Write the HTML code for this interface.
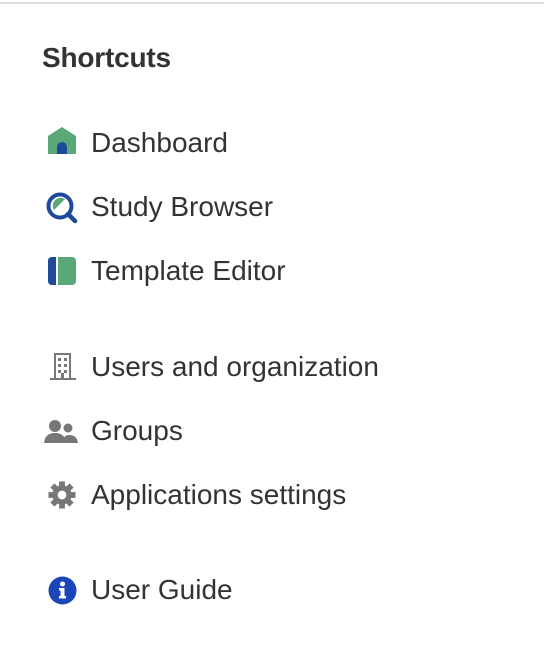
<!DOCTYPE html>
<html><head><style>
html,body{margin:0;padding:0;background:#fff;}
body{width:544px;height:662px;position:relative;overflow:hidden;font-family:"Liberation Sans",Arial,sans-serif;color:#333;}
.top{position:absolute;left:0;top:2px;width:544px;height:2px;background:#ddd;}
h1{position:absolute;left:42px;top:42px;margin:0;font-size:28px;font-weight:bold;color:#333;letter-spacing:-0.2px;}
.it{position:absolute;left:91px;font-size:28px;line-height:30px;}
svg{position:absolute;}
</style></head><body>
<div class="top"></div>
<h1>Shortcuts</h1>

<svg style="left:48px;top:127px" width="28" height="27" viewBox="0 0 28 27"><path d="M0 9 L14 0 L28 9 V27 H0Z" fill="#5aa777"/><path d="M9 27 V20 a5 5 0 0 1 10 0 V27Z" fill="#1e4a9c"/></svg>
<div class="it" style="top:128px">Dashboard</div>

<svg style="left:45px;top:191px" width="34" height="34" viewBox="0 0 34 34"><circle cx="15" cy="15" r="11.5" fill="none" stroke="#1e4a9c" stroke-width="4"/><path d="M9 19 A8 8 0 0 1 20 8 Z" fill="#5aa777"/><path d="M23 23 L30 30" stroke="#1e4a9c" stroke-width="4.5" stroke-linecap="round"/></svg>
<div class="it" style="top:192px">Study Browser</div>

<svg style="left:48px;top:257px" width="28" height="28" viewBox="0 0 28 28"><rect x="0" y="0" width="28" height="28" rx="4" fill="#5aa777"/><path d="M4 0 H8 V28 H4 A4 4 0 0 1 0 24 V4 A4 4 0 0 1 4 0Z" fill="#1e4a9c"/><rect x="8" y="0" width="2" height="28" fill="#fff"/></svg>
<div class="it" style="top:256px">Template Editor</div>

<svg style="left:50px;top:352px" width="26" height="28" viewBox="0 0 26 28"><g fill="none" stroke="#777" stroke-width="2"><rect x="5" y="2" width="15" height="25"/></g><rect x="0" y="26" width="26" height="2" fill="#777"/><g fill="#777"><rect x="8" y="6" width="3" height="3"/><rect x="14" y="6" width="3" height="3"/><rect x="8" y="12" width="3" height="3"/><rect x="14" y="12" width="3" height="3"/><rect x="8" y="18" width="3" height="3"/><rect x="14" y="18" width="3" height="3"/><rect x="11" y="21" width="3" height="6"/></g></svg>
<div class="it" style="top:352px">Users and organization</div>

<svg style="left:44px;top:419px" width="34" height="24" viewBox="0 0 34 24"><circle cx="11" cy="7" r="6" fill="#777"/><path d="M0 24 Q1 14 11 14 Q21 14 22 24Z" fill="#777"/><circle cx="24" cy="9" r="5" fill="#777" stroke="#fff" stroke-width="1"/><path d="M19 24 Q19 16 25 16 Q33 16 34 24Z" fill="#777"/></svg>
<div class="it" style="top:416px">Groups</div>

<svg style="left:48px;top:481px" width="28" height="28" viewBox="0 0 29 29"><g fill="#777" transform="translate(14.5 14.5)"><circle r="10"/><g><rect x="-3" y="-14" width="6" height="6"/><rect x="-3" y="-14" width="6" height="6" transform="rotate(45)"/><rect x="-3" y="-14" width="6" height="6" transform="rotate(90)"/><rect x="-3" y="-14" width="6" height="6" transform="rotate(135)"/><rect x="-3" y="-14" width="6" height="6" transform="rotate(180)"/><rect x="-3" y="-14" width="6" height="6" transform="rotate(225)"/><rect x="-3" y="-14" width="6" height="6" transform="rotate(270)"/><rect x="-3" y="-14" width="6" height="6" transform="rotate(315)"/></g><circle r="4.5" fill="#fff"/></g></svg>
<div class="it" style="top:480px">Applications settings</div>

<svg style="left:48px;top:576px" width="29" height="29" viewBox="0 0 29 29"><circle cx="14.5" cy="14.5" r="14" fill="#1a46b8"/><circle cx="14.5" cy="8" r="2.5" fill="#fff"/><path d="M11 12 H16.5 V20 H18 V22.5 H11 V20 H12.5 V14.5 H11Z" fill="#fff"/></svg>
<div class="it" style="top:575px">User Guide</div>
</body></html>
